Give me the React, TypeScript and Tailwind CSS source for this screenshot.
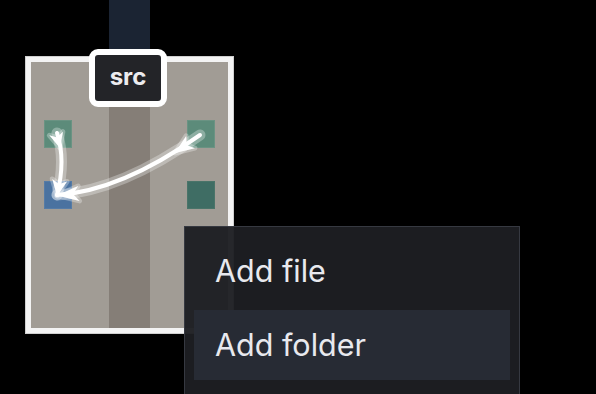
import React from 'react'

type Pt = [number, number]

// notched arrow head, tip at t pointing along d
const head = (t: Pt, d: Pt, len = 17, hw = 7, notch = 5) => {
  const m = Math.hypot(d[0], d[1])
  const ux = d[0] / m
  const uy = d[1] / m
  const bx = t[0] - ux * len
  const by = t[1] - uy * len
  const px = -uy
  const py = ux
  const nx = t[0] - ux * (len - notch)
  const ny = t[1] - uy * (len - notch)
  return `${t[0]},${t[1]} ${bx + px * hw},${by + py * hw} ${nx},${ny} ${bx - px * hw},${by - py * hw}`
}

const arrows = [
  {
    d: 'M57,133 Q66,160 57,195',
    heads: [
      head([60, 148], [7, 26], 15, 7, 4),
      head([57, 196], [-6, 35], 16, 7.5, 4),
    ],
  },
  {
    d: 'M200,135 Q121,191 57,195',
    heads: [
      head([175, 153], [-79, 56], 19, 7.5, 5),
      head([57, 195.5], [-64, 6], 22, 7.5, 6),
    ],
  },
]

const Arrows = () => (
  <svg
    className="absolute left-0 top-0 pointer-events-none"
    width={596}
    height={394}
    viewBox="0 0 596 394"
  >
    {arrows.map((a, i) => (
      <g key={i}>
        <path d={a.d} fill="none" stroke="rgba(255,255,255,0.3)" strokeWidth={11} strokeLinecap="round" />
        {a.heads.map((h, j) => (
          <polygon key={j} points={h} fill="rgba(255,255,255,0.3)" stroke="rgba(255,255,255,0.3)" strokeWidth={5} strokeLinejoin="round" />
        ))}
      </g>
    ))}
    {arrows.map((a, i) => (
      <g key={i}>
        <path d={a.d} fill="none" stroke="#ffffff" strokeWidth={4} strokeLinecap="round" />
        {a.heads.map((h, j) => (
          <polygon key={j} points={h} fill="#ffffff" />
        ))}
      </g>
    ))}
  </svg>
)

const Folder = () => (
  <div className="absolute left-[26px] top-[57px] w-[207px] h-[276px] border-[5px] border-[#f3f3f3] outline outline-1 outline-[#cfcfcf] flex">
    <div className="w-[78px] h-full bg-[#a19c95] flex flex-col pl-[13px] pt-[58px] gap-[33px]">
      <div className="size-[28px] bg-[#5c8b7a] border border-[#6a9383]" />
      <div className="size-[28px] bg-[#4a72a0] border border-[#557ba6]" />
    </div>
    <div className="w-[41px] h-full bg-[#857e77]" />
    <div className="w-[78px] h-full bg-[#a19c95] flex flex-col items-end pr-[13px] pt-[58px] gap-[33px]">
      <div className="size-[28px] bg-[#5c8b7a] border border-[#6a9383]" />
      <div className="size-[28px] bg-[#3f6d64] border border-[#4a7469]" />
    </div>
  </div>
)

const ContextMenu = () => (
  <div className="absolute left-[184px] top-[226px] w-[336px] border border-[#363941] bg-[rgba(29,30,34,0.96)] p-[9px] pb-[30px] flex flex-col gap-[4px] font-['Inter',sans-serif] text-[#e8e9ee]">
    <div className="h-[70px] flex items-center pl-[21px] text-[30.5px]">Add file</div>
    <div className="h-[70px] flex items-center pl-[21px] text-[30.5px] bg-[#272b34]">Add folder</div>
  </div>
)

export default function App() {
  return (
    <div className="relative w-[596px] h-[394px] bg-black overflow-hidden">
      <div className="absolute left-[109px] top-0 w-[41px] h-[60px] bg-[#1b2433]" />
      <Folder />
      <Arrows />
      <div className="absolute left-[89px] top-[49px] w-[78px] h-[58px] rounded-[9px] border-[6px] border-white bg-[#232428] flex items-center justify-center font-['Inter',sans-serif] font-bold text-[24px] text-[#ececef] pb-[2px]">
        src
      </div>
      <ContextMenu />
    </div>
  )
}
